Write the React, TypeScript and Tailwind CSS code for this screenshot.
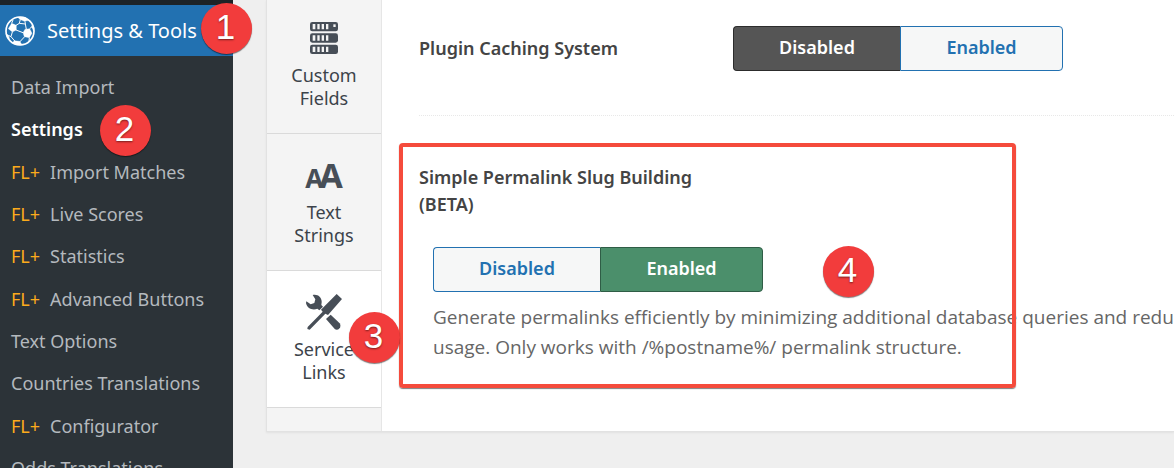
import React from 'react';
import clsx from 'clsx';

const menuItems = [
  { label: 'Data Import' },
  { label: 'Settings', active: true, step: 2 },
  { label: 'Import Matches', plus: true },
  { label: 'Live Scores', plus: true },
  { label: 'Statistics', plus: true },
  { label: 'Advanced Buttons', plus: true },
  { label: 'Text Options' },
  { label: 'Countries Translations' },
  { label: 'Configurator', plus: true },
  { label: 'Odds Translations' },
];

const BallIcon = () => (
  <svg viewBox="0 0 90 90" className="w-[30px] h-[30px] shrink-0" fill="white" stroke="white" aria-hidden="true">
    <circle cx="45" cy="45" r="42" fill="none" strokeWidth="5" />
    <path d="M20 22 L34 28 L34 42 L22 48 L10 38 Z" />
    <path d="M60 40 L74 38 L81 52 L73 65 L58 62 L54 50 Z" />
    <path d="M38 3 L60 4 L72 13 L58 16 L44 10 Z" />
    <path d="M28 74 L44 76 L52 87 L36 86 L22 80 Z" />
    <path d="M3 52 L10 58 L14 68 L7 64 Z M82 24 L87 36 L86 46 L80 32 Z" />
    <path
      d="M33 28 L43 22 L46 10 M43 22 L61 24 L60 16 M61 24 L64 40 M33 42 L54 50 M22 48 L18 62 L30 76 M18 62 L10 58 M44 78 L59 62 M73 65 L72 76 M20 22 L24 12 M74 38 L81 32"
      fill="none"
      strokeWidth="3"
    />
  </svg>
);

const FieldsIcon = () => (
  <svg viewBox="0 0 84 96" className="w-[28px] h-[32px]" fill="#474e57" aria-hidden="true">
    {[0, 34, 68].map((y) => (
      <g key={y}>
        <rect x="0" y={y} width="84" height="28" rx="7" />
        <path d={`M8 ${y + 6}h8v16h-8z M22 ${y + 6}h7v16h-7z M35 ${y + 6}h7v16h-7z M48 ${y + 6}h7v16h-7z`} fill="#f4f4f4" />
      </g>
    ))}
    <rect x="70" y="7" width="7" height="8" fill="#f4f4f4" />
  </svg>
);

const LettersIcon = () => (
  <span className="flex items-baseline font-bold leading-none text-[#474e57]" aria-hidden="true">
    <span className="text-[26px]">A</span>
    <span className="-ml-1 text-[34px]">A</span>
  </span>
);

const ToolsIcon = () => (
  <svg viewBox="0 0 108 108" className="w-[36px] h-[36px]" fill="#474e57" aria-hidden="true">
    <path d="M92 0 L108 15 L66 63 L58 59 L11 107 L4 105 L5 99 L50 53 L45 47 Z" />
    <path d="M20 3 C34 -1 48 9 47 25 L46 33 L51 38 L40 49 L34 44 C20 51 2 42 0 27 L1 22 L14 31 L25 27 L28 16 Z" />
    <path d="M60 75 L74 62 L101 88 C108 98 98 111 87 106 Z" />
  </svg>
);

const StepBadge = ({ step, className }: { step: number; className: string }) => (
  <span
    className={clsx(
      'absolute z-20 flex h-[51px] w-[51px] items-center justify-center rounded-full bg-[#f23c3c] pb-1 pr-[2px] font-["Liberation_Sans",sans-serif] text-[35px] font-normal leading-none text-white shadow-[0_1px_1px_rgba(0,0,0,0.5)] [text-shadow:0_1px_2px_rgba(0,0,0,0.5)]',
      className
    )}
  >
    {step}
  </span>
);

const Toggle = ({ label, enabled }: { label: string; enabled: boolean }) => (
  <div role="group" aria-label={label} className="flex h-[45px] w-[330px] shrink-0 text-lg font-semibold">
    <button
      type="button"
      aria-pressed={!enabled}
      className={clsx(
        'w-[167px] rounded-l border border-r-0 pb-1',
        enabled ? 'border-[#2271b1] bg-[#f6f7f7] text-[#2271b1]' : 'border-[#2c2c2c] bg-[#555555] text-white'
      )}
    >
      Disabled
    </button>
    <button
      type="button"
      aria-pressed={enabled}
      className={clsx(
        'flex-1 rounded-r border pb-1',
        enabled ? 'border-[#2f5d46] bg-[#4b8f6b] text-white' : 'border-[#2271b1] bg-[#f6f7f7] text-[#2271b1]'
      )}
    >
      Enabled
    </button>
  </div>
);

const tabs = [
  { first: 'Custom', second: 'Fields', icon: <FieldsIcon /> },
  { first: 'Text', second: 'Strings', icon: <LettersIcon /> },
  { first: 'Service', second: 'Links', icon: <ToolsIcon />, active: true, step: 3 },
];

export default function App() {
  return (
    <div className='flex h-screen overflow-hidden bg-[#efefef] font-["Noto_Sans","Open_Sans",sans-serif] text-lg'>
      {/* Admin menu */}
      <nav className="w-[233px] shrink-0 border-t-5 border-[#1d2327] bg-[#2c3338]">
        <div className="relative">
          <a href="#tools" className="flex h-[51px] items-center gap-3 whitespace-nowrap bg-[#2271b1] pl-[5px] text-xl text-white">
            <BallIcon />
            Settings &amp; Tools
          </a>
          <StepBadge step={1} className="-top-[2px] left-[201px]" />
        </div>
        <ul className="grid min-h-[433px] auto-rows-fr pt-[10px]">
          {menuItems.map((item) => (
            <li key={item.label} className="relative flex items-center pl-[11px]">
              <a
                href="#menu"
                className={clsx('flex gap-[10px] whitespace-nowrap', item.active ? 'font-semibold text-white' : 'text-[#b4b9be]')}
              >
                {item.plus && <span className="text-[#fcab1c]">FL+</span>}
                {item.label}
              </a>
              {item.step && <StepBadge step={item.step} className="-top-[3px] left-[100px]" />}
            </li>
          ))}
        </ul>
      </nav>

      <main className="min-w-0 flex-1 pl-[33px]">
        <div className="flex h-[432px] border-b border-l border-[#e2e2e2] bg-white shadow-[0_1px_2px_rgba(0,0,0,0.06)]">
          {/* Section tabs */}
          <div className="w-[115px] shrink-0 border-r border-[#e6e6e6] bg-[#f4f4f4]">
            <div className="-mt-[3px]">
              {tabs.map((tab) => (
                <div key={tab.second} className="relative">
                  <a
                    href="#section"
                    className={clsx(
                      'flex h-[137px] flex-col items-center border-b border-[#dadada] pt-[23px] text-center leading-[23px] text-[#3c434a]',
                      tab.active && 'bg-white'
                    )}
                  >
                    <span className="mb-2 flex h-[36px] items-center justify-center">{tab.icon}</span>
                    <span>{tab.first}</span>
                    <span>{tab.second}</span>
                  </a>
                  {tab.step && <StepBadge step={tab.step} className="left-[82px] top-[41px]" />}
                </div>
              ))}
            </div>
          </div>

          {/* Options */}
          <div className="min-w-0 flex-1 pl-[37px] text-[#444444]">
            <div className="flex h-[116px] items-start border-b border-dotted border-[#e8e8e8] pt-[26px]">
              <h3 className="w-[314px] shrink-0 font-semibold leading-[45px]">Plugin Caching System</h3>
              <Toggle label="Plugin Caching System" enabled={false} />
            </div>

            <div className="relative pt-[48px]">
              <h3 className="w-[300px] font-semibold leading-[27px]">Simple Permalink Slug Building (BETA)</h3>
              <div className="ml-[14px] mt-[29px]">
                <Toggle label="Simple Permalink Slug Building (BETA)" enabled />
                <p className='mt-[10px] whitespace-nowrap font-["Open_Sans","Noto_Sans",sans-serif] text-[19px] leading-[30px] text-[#666666]'>
                  Generate permalinks efficiently by minimizing additional database queries and reducing
                  <br />
                  usage. Only works with /%postname%/ permalink structure.
                </p>
              </div>
              <div className="pointer-events-none absolute -left-[20px] top-[27px] h-[245px] w-[617px] rounded border-4 border-[#f54b3c] shadow-[0_1px_1px_rgba(0,0,0,0.5)]" />
              <StepBadge step={4} className="left-[404px] top-[130px]" />
            </div>
          </div>
        </div>
      </main>
    </div>
  );
}
